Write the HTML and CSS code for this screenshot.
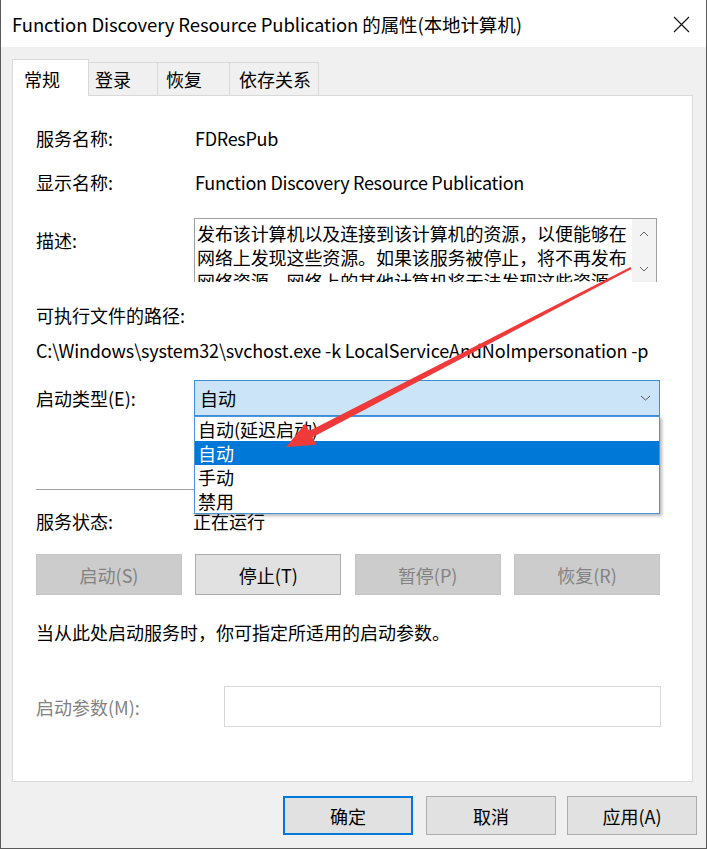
FILE: index.html
```html
<!DOCTYPE html>
<html lang="zh-CN">
<head>
<meta charset="utf-8">
<title>Function Discovery Resource Publication 的属性(本地计算机)</title>
<link rel="stylesheet" href="styles.css">
</head>
<body>
<div class="window">
  <div class="titlebar">
    <span class="title">Function Discovery Resource Publication 的属性(本地计算机)</span>
    <svg class="close" width="17" height="17" viewBox="0 0 17 17"><path d="M1 1L16 16M16 1L1 16" stroke="#111" stroke-width="1.1" fill="none"/></svg>
  </div>
  <div class="client">
    <div class="tabs">
      <div class="tab tab-active">常规</div>
      <div class="tab tab-logon">登录</div>
      <div class="tab tab-recover">恢复</div>
      <div class="tab tab-deps">依存关系</div>
    </div>
    <div class="panel">
      <div class="row r-name"><span class="label">服务名称:</span><span class="value value-latin">FDResPub</span></div>
      <div class="row r-display"><span class="label">显示名称:</span><span class="value value-latin">Function Discovery Resource Publication</span></div>
      <div class="row r-desc">
        <span class="label label-desc">描述:</span>
        <div class="textbox">
          <div class="textbox-text">发布该计算机以及连接到该计算机的资源，以便能够在网络上发现这些资源。如果该服务被停止，将不再发布网络资源，网络上的其他计算机将无法发现这些资源。</div>
          <div class="scrollbar">
            <svg width="10" height="6" viewBox="0 0 10 6"><path d="M1 5L5 1L9 5" stroke="#606060" stroke-width="1" fill="none"/></svg>
            <svg width="10" height="6" viewBox="0 0 10 6"><path d="M1 1L5 5L9 1" stroke="#606060" stroke-width="1" fill="none"/></svg>
          </div>
        </div>
      </div>
      <div class="r-pathlabel">可执行文件的路径:</div>
      <div class="r-path">C:\Windows\system32\svchost.exe -k LocalServiceAndNoImpersonation -p</div>
      <div class="row r-startup">
        <span class="label">启动类型(E):</span>
        <div class="combo">
          <span class="combo-text">自动</span>
          <svg class="combo-arrow" width="11" height="6" viewBox="0 0 11 6"><path d="M1 1L5.5 5L10 1" stroke="#555" stroke-width="1" fill="none"/></svg>
          <div class="dropdown">
            <div class="option">自动(延迟启动)</div>
            <div class="option option-selected">自动</div>
            <div class="option">手动</div>
            <div class="option">禁用</div>
          </div>
        </div>
      </div>
      <div class="separator"></div>
      <div class="row r-status"><span class="label">服务状态:</span><span class="value value-status">正在运行</span></div>
      <div class="svc-buttons">
        <div class="btn btn-disabled">启动(S)</div>
        <div class="btn">停止(T)</div>
        <div class="btn btn-disabled">暂停(P)</div>
        <div class="btn btn-disabled">恢复(R)</div>
      </div>
      <div class="r-note">当从此处启动服务时，你可指定所适用的启动参数。</div>
      <div class="row r-params">
        <span class="label label-disabled">启动参数(M):</span>
        <div class="param-input"></div>
      </div>
    </div>
    <div class="footer">
      <div class="btn footer-btn btn-default">确定</div>
      <div class="btn footer-btn btn-cancel">取消</div>
      <div class="btn footer-btn">应用(A)</div>
    </div>
  </div>
  <svg class="arrow" width="707" height="849" viewBox="0 0 707 849">
    <polygon points="631.5,268.9 312.5,437.2 316.4,444.8 286,447 305.3,423.5 309.2,431.0 630.5,267.1" fill="#f03a3a"/>
  </svg>
</div>
</body>
</html>
```

FILE: styles.css
```css
html, body {
  margin: 0;
  padding: 0;
}
body {
  font-family: "Noto Sans CJK SC", "Noto Sans", sans-serif;
  font-size: 18px;
  line-height: 24px;
  color: #000;
  background: #f0f0f0;
}
.window {
  position: relative;
  width: 707px;
  height: 849px;
  box-sizing: border-box;
  border: 1px solid #5a5a5a;
  border-top: none;
  background: #f0f0f0;
  display: flex;
  flex-direction: column;
  overflow: hidden;
}
.titlebar {
  height: 47px;
  flex: none;
  background: #fff;
  display: flex;
  align-items: center;
  padding-left: 11px;
  padding-right: 16px;
}
.title {
  font-size: 18.5px;
  letter-spacing: -0.1px;
  white-space: nowrap;
}
.close {
  margin-left: auto;
  margin-top: 2px;
}
.client {
  flex: 1;
  display: flex;
  flex-direction: column;
  padding: 0 9px 0 11px;
}
.tabs {
  display: flex;
  align-items: flex-end;
  height: 37px;
  margin-top: 12px;
  margin-bottom: -1px;
  position: relative;
  z-index: 1;
}
.tab {
  box-sizing: border-box;
  height: 33px;
  margin-bottom: 1px;
  border: 1px solid #d9d9d9;
  border-bottom: none;
  border-left: none;
  background: #f0f0f0;
  line-height: 33px;
  white-space: nowrap;
}
.tab-active {
  height: 37px;
  margin-bottom: 0;
  width: 77px;
  border-left: 1px solid #d9d9d9;
  background: #fff;
  padding-left: 11px;
  line-height: 38px;
}
.tab-logon { width: 69px; padding-left: 6px; }
.tab-recover { width: 72px; padding-left: 8px; }
.tab-deps { width: 89px; padding-left: 9px; }
.panel {
  box-sizing: border-box;
  width: 681px;
  height: 687px;
  background: #fff;
  border: 1px solid #d9d9d9;
  padding-left: 23px;
  display: flex;
  flex-direction: column;
}
.row {
  display: flex;
  align-items: center;
}
.label {
  width: 158px;
  flex: none;
  white-space: nowrap;
}
.value {
  padding-left: 1px;
  white-space: nowrap;
}
.value-latin {
  letter-spacing: -0.3px;
}
.r-name { margin-top: 30px; }
.r-display { margin-top: 20px; }
.r-desc {
  margin-top: 24px;
  align-items: flex-start;
}
.label-desc { padding-top: 10px; }
.textbox {
  box-sizing: border-box;
  width: 463px;
  height: 64px;
  border: 1px solid #a0a0a0;
  border-bottom: none;
  display: flex;
  overflow: hidden;
}
.textbox-text {
  flex: 1;
  padding: 2px 0 0 2px;
  letter-spacing: -0.1px;
}
.scrollbar {
  width: 24px;
  flex: none;
  background: #f3f3f3;
  display: flex;
  flex-direction: column;
  align-items: center;
  justify-content: space-between;
  padding: 12px 0 10px;
  box-sizing: border-box;
}
.r-pathlabel { margin-top: 21px; }
.r-path {
  margin-top: 11px;
  white-space: nowrap;
  letter-spacing: -0.14px;
}
.r-startup { margin-top: 18px; }
.combo {
  position: relative;
  box-sizing: border-box;
  width: 466px;
  height: 36px;
  border: 1px solid #3d8edb;
  background: #cce4f7;
  display: flex;
  align-items: center;
  padding-left: 5px;
  padding-right: 8px;
}
.combo-arrow { margin-left: auto; }
.dropdown {
  position: absolute;
  left: -1px;
  top: 35px;
  width: 466px;
  box-sizing: border-box;
  border: 1px solid #4a96dc;
  background: #fff;
  box-shadow: 2px 2px 3px rgba(0, 0, 0, 0.28);
  z-index: 5;
}
.option {
  height: 24px;
  line-height: 24px;
  padding-left: 3px;
}
.option-selected {
  background: #0078d7;
  color: #fff;
}
.separator {
  margin-top: 73px;
  width: 624px;
  height: 1px;
  background: #a0a0a0;
}
.r-status { margin-top: 19px; }
.value-status { padding-left: 0; margin-left: -1px; }
.svc-buttons {
  margin-top: 21px;
  width: 624px;
  display: flex;
  justify-content: space-between;
}
.btn {
  box-sizing: border-box;
  width: 146px;
  height: 41px;
  border: 1px solid #adadad;
  background: #e1e1e1;
  display: flex;
  align-items: center;
  justify-content: center;
  white-space: nowrap;
}
.btn-disabled {
  background: #cccccc;
  border-color: #c4c4c4;
  color: #838383;
}
.r-note { margin-top: 25px; }
.r-params { margin-top: 42px; }
.label-disabled {
  width: 188px;
  color: #838383;
}
.param-input {
  box-sizing: border-box;
  width: 437px;
  height: 41px;
  border: 1px solid #d9d9d9;
  background: #fff;
}
.footer {
  display: flex;
  justify-content: flex-end;
  margin-top: 14px;
}
.footer-btn {
  width: 130px;
  height: 39px;
}
.btn-default {
  border: 2px solid #0078d7;
}
.btn-cancel {
  margin: 0 11px 0 13px;
}
.arrow {
  position: absolute;
  left: -1px;
  top: 0;
  pointer-events: none;
  z-index: 10;
}
```
